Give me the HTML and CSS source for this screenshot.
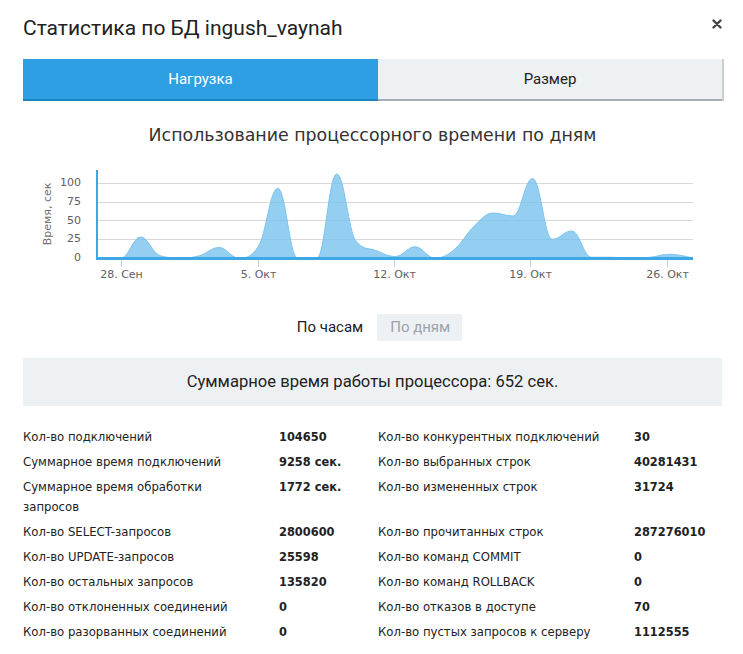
FILE: index.html
```html
<!DOCTYPE html>
<html lang="ru">
    <head>
        <meta charset="UTF-8" />
        <meta name="viewport" content="width=device-width, initial-scale=1.0" />
        <title>Статистика по БД ingush_vaynah</title>
        <link rel="stylesheet" href="styles.css">
    </head>
    <body>
        <div class="modal">
            <div class="modal-header">
                <h2 class="modal-title">Статистика по БД ingush_vaynah</h2>
                <button class="modal-close" title="Закрыть">
                    <svg width="10" height="10" viewBox="0 0 10 10">
                        <path d="M1.5 1.5 L8.5 8.5 M8.5 1.5 L1.5 8.5" stroke="#444" stroke-width="2.4" stroke-linecap="round" />
                    </svg>
                </button>
            </div>

            <div class="tabs">
                <div class="tab tab-active">Нагрузка</div>
                <div class="tab">Размер</div>
            </div>

            <div class="chart">
                <div class="chart-title">Использование процессорного времени по дням</div>
                <svg class="chart-plot" width="699" height="138" viewBox="23 147 699 138">
                    <defs>
                        <clipPath id="plot-clip">
                            <rect x="97" y="160" width="596" height="98" />
                        </clipPath>
                    </defs>

                    <!-- grid -->
                    <g class="grid">
                        <line x1="97" y1="183.5" x2="693" y2="183.5" />
                        <line x1="97" y1="202.5" x2="693" y2="202.5" />
                        <line x1="97" y1="220.5" x2="693" y2="220.5" />
                        <line x1="97" y1="239.5" x2="693" y2="239.5" />
                    </g>

                    <path id="cpu-area" class="area" clip-path="url(#plot-clip)" d="" />
                    <path id="cpu-line" class="area-line" clip-path="url(#plot-clip)" d="" />

                    <!-- axes -->
                    <line class="axis" x1="97" y1="170" x2="97" y2="259.5" />
                    <line class="axis axis-x" x1="96" y1="258.5" x2="693" y2="258.5" />

                    <g class="ticks">
                        <line x1="121.5" y1="260" x2="121.5" y2="267" />
                        <line x1="258.5" y1="260" x2="258.5" y2="267" />
                        <line x1="394.5" y1="260" x2="394.5" y2="267" />
                        <line x1="530.5" y1="260" x2="530.5" y2="267" />
                        <line x1="667.5" y1="260" x2="667.5" y2="267" />
                    </g>

                    <g class="y-labels">
                        <text x="81" y="186">100</text>
                        <text x="81" y="205">75</text>
                        <text x="81" y="224">50</text>
                        <text x="81" y="242">25</text>
                        <text x="81" y="261">0</text>
                    </g>
                    <text class="y-title" transform="translate(51 214) rotate(-90)">Время, сек</text>

                    <g class="x-labels">
                        <text x="121.5" y="278">28. Сен</text>
                        <text x="258.5" y="278">5. Окт</text>
                        <text x="394.5" y="278">12. Окт</text>
                        <text x="530.5" y="278">19. Окт</text>
                        <text x="667.5" y="278">26. Окт</text>
                    </g>
                </svg>
            </div>

            <div class="period-switch">
                <span class="period-option">По часам</span>
                <span class="period-option period-option-muted">По дням</span>
            </div>

            <div class="summary">Суммарное время работы процессора: 652 сек.</div>

            <div class="stats">
                <div class="stats-label">Кол-во подключений</div>
                <div class="stats-value">104650</div>
                <div class="stats-label">Кол-во конкурентных подключений</div>
                <div class="stats-value">30</div>

                <div class="stats-label">Суммарное время подключений</div>
                <div class="stats-value">9258 сек.</div>
                <div class="stats-label">Кол-во выбранных строк</div>
                <div class="stats-value">40281431</div>

                <div class="stats-label">Суммарное время обработки запросов</div>
                <div class="stats-value">1772 сек.</div>
                <div class="stats-label">Кол-во измененных строк</div>
                <div class="stats-value">31724</div>

                <div class="stats-label">Кол-во SELECT-запросов</div>
                <div class="stats-value">2800600</div>
                <div class="stats-label">Кол-во прочитанных строк</div>
                <div class="stats-value">287276010</div>

                <div class="stats-label">Кол-во UPDATE-запросов</div>
                <div class="stats-value">25598</div>
                <div class="stats-label">Кол-во команд COMMIT</div>
                <div class="stats-value">0</div>

                <div class="stats-label">Кол-во остальных запросов</div>
                <div class="stats-value">135820</div>
                <div class="stats-label">Кол-во команд ROLLBACK</div>
                <div class="stats-value">0</div>

                <div class="stats-label">Кол-во отклоненных соединений</div>
                <div class="stats-value">0</div>
                <div class="stats-label">Кол-во отказов в доступе</div>
                <div class="stats-value">70</div>

                <div class="stats-label">Кол-во разорванных соединений</div>
                <div class="stats-value">0</div>
                <div class="stats-label">Кол-во пустых запросов к серверу</div>
                <div class="stats-value">1112555</div>
            </div>
        </div>

        <script>
            // ---- CPU seconds per day, 27 Sep .. 27 Oct ----
            const values = [0, 0, 28, 3, 0, 3, 14, 0, 15, 93, 0, 0, 112, 22, 10, 2, 15, 0, 11, 42, 60, 56, 106, 25, 36, 1, 1, 0, 1, 5, 1];

            const startX = 121 - 19.6;
            const step = 19.6;
            const baseY = 258;
            const pxPerSec = 0.75;

            const pts = values.map((v, i) => ({ x: startX + i * step, y: baseY - v * pxPerSec }));

            // same smoothing as a highcharts spline
            function controls(i) {
                const p = pts[i];
                const prev = pts[i - 1];
                const next = pts[i + 1];
                if (!prev || !next) return null;

                const smoothing = 1.5;
                const denom = 2.5;
                let lx = (smoothing * p.x + prev.x) / denom;
                let ly = (smoothing * p.y + prev.y) / denom;
                let rx = (smoothing * p.x + next.x) / denom;
                let ry = (smoothing * p.y + next.y) / denom;

                const correction = ((ry - ly) * (rx - p.x)) / (rx - lx) + p.y - ry;
                ly += correction;
                ry += correction;

                if (ly > prev.y && ly > p.y) {
                    ly = Math.max(prev.y, p.y);
                    ry = 2 * p.y - ly;
                } else if (ly < prev.y && ly < p.y) {
                    ly = Math.min(prev.y, p.y);
                    ry = 2 * p.y - ly;
                }
                if (ry > next.y && ry > p.y) {
                    ry = Math.max(next.y, p.y);
                    ly = 2 * p.y - ry;
                } else if (ry < next.y && ry < p.y) {
                    ry = Math.min(next.y, p.y);
                    ly = 2 * p.y - ry;
                }
                return { lx, ly, rx, ry };
            }

            let line = `M ${pts[0].x} ${pts[0].y}`;
            for (let i = 1; i < pts.length; i++) {
                const a = controls(i - 1);
                const b = controls(i);
                const prev = pts[i - 1];
                const p = pts[i];
                line += ` C ${a ? a.rx : prev.x} ${a ? a.ry : prev.y} ${b ? b.lx : p.x} ${b ? b.ly : p.y} ${p.x} ${p.y}`;
            }

            const last = pts[pts.length - 1];
            const area = `${line} L ${last.x} ${baseY} L ${pts[0].x} ${baseY} Z`;

            document.getElementById("cpu-line").setAttribute("d", line);
            document.getElementById("cpu-area").setAttribute("d", area);
        </script>
    </body>
</html>
```

FILE: styles.css
```css
html,
body {
    margin: 0;
    background-color: #fff;
}

body {
    font-family: Roboto, "Liberation Sans", sans-serif;
    color: #222;
}

.modal {
    width: 743px;
    box-sizing: border-box;
    padding: 0 21px 0 23px;
}

/* Header */
.modal-header {
    display: flex;
    justify-content: space-between;
    height: 59px;
}

.modal-title {
    margin: 13px 0 0;
    font-size: 21px;
    font-weight: 400;
    line-height: 30px;
    color: #222;
}

.modal-close {
    margin-top: 19px;
    width: 10px;
    height: 10px;
    padding: 0;
    border: 0;
    background: none;
    cursor: pointer;
}

.modal-close svg {
    display: block;
}

/* Tabs */
.tabs {
    display: flex;
}

.tab {
    flex: 1;
    height: 40px;
    line-height: 40px;
    text-align: center;
    font-size: 15px;
    color: #222;
    background-color: #eef1f4;
    border-bottom: 2px solid #a6adb5;
    box-shadow: 2px 0 0 #c9ced3;
}

.tab-active {
    flex: 0 0 355px;
    color: #fff;
    background-color: #2f9fe3;
    border-bottom-color: #1d82c4;
    box-shadow: none;
}

/* Chart */
.chart-title {
    margin-top: 22px;
    font-family: "DejaVu Sans", sans-serif;
    font-size: 17.4px;
    line-height: 24px;
    text-align: center;
    color: #333;
}

.chart-plot {
    display: block;
    font-family: "DejaVu Sans", sans-serif;
}

.grid line {
    stroke: #d8d8d8;
    stroke-width: 1;
}

.area {
    fill: rgba(121, 195, 239, 0.8);
}

.area-line {
    fill: none;
    stroke: #7cc3ef;
    stroke-width: 1;
}

.axis {
    stroke: #3ea8e6;
    stroke-width: 2;
}

.axis-x {
    stroke-width: 3;
}

.ticks line {
    stroke: #c0d0e0;
    stroke-width: 1;
}

.y-labels text {
    font-size: 11px;
    fill: #606060;
    text-anchor: end;
}

.y-title {
    font-size: 11px;
    fill: #707070;
    text-anchor: middle;
}

.x-labels text {
    font-size: 11px;
    fill: #606060;
    text-anchor: middle;
}

/* Period switch */
.period-switch {
    display: flex;
    justify-content: center;
    margin-top: 29px;
}

.period-option {
    padding: 0 14px;
    font-size: 15px;
    line-height: 27px;
    color: #222;
}

.period-option-muted {
    padding: 0 12px 0 13px;
    color: #9ca3ab;
    background-color: #eef1f4;
}

/* Summary */
.summary {
    margin-top: 17px;
    height: 48px;
    line-height: 48px;
    text-align: center;
    font-size: 16.6px;
    background-color: #eef1f4;
}

/* Stats table */
.stats {
    display: grid;
    grid-template-columns: 256px 99px 256px 1fr;
    margin-top: 18px;
    font-family: "DejaVu Sans", sans-serif;
    font-size: 11.7px;
    line-height: 20px;
    color: #222;
}

.stats-label {
    padding: 2.5px 20px 2.5px 0;
}

.stats-value {
    padding: 2.5px 0;
    font-weight: bold;
    font-size: 11.4px;
}
```
